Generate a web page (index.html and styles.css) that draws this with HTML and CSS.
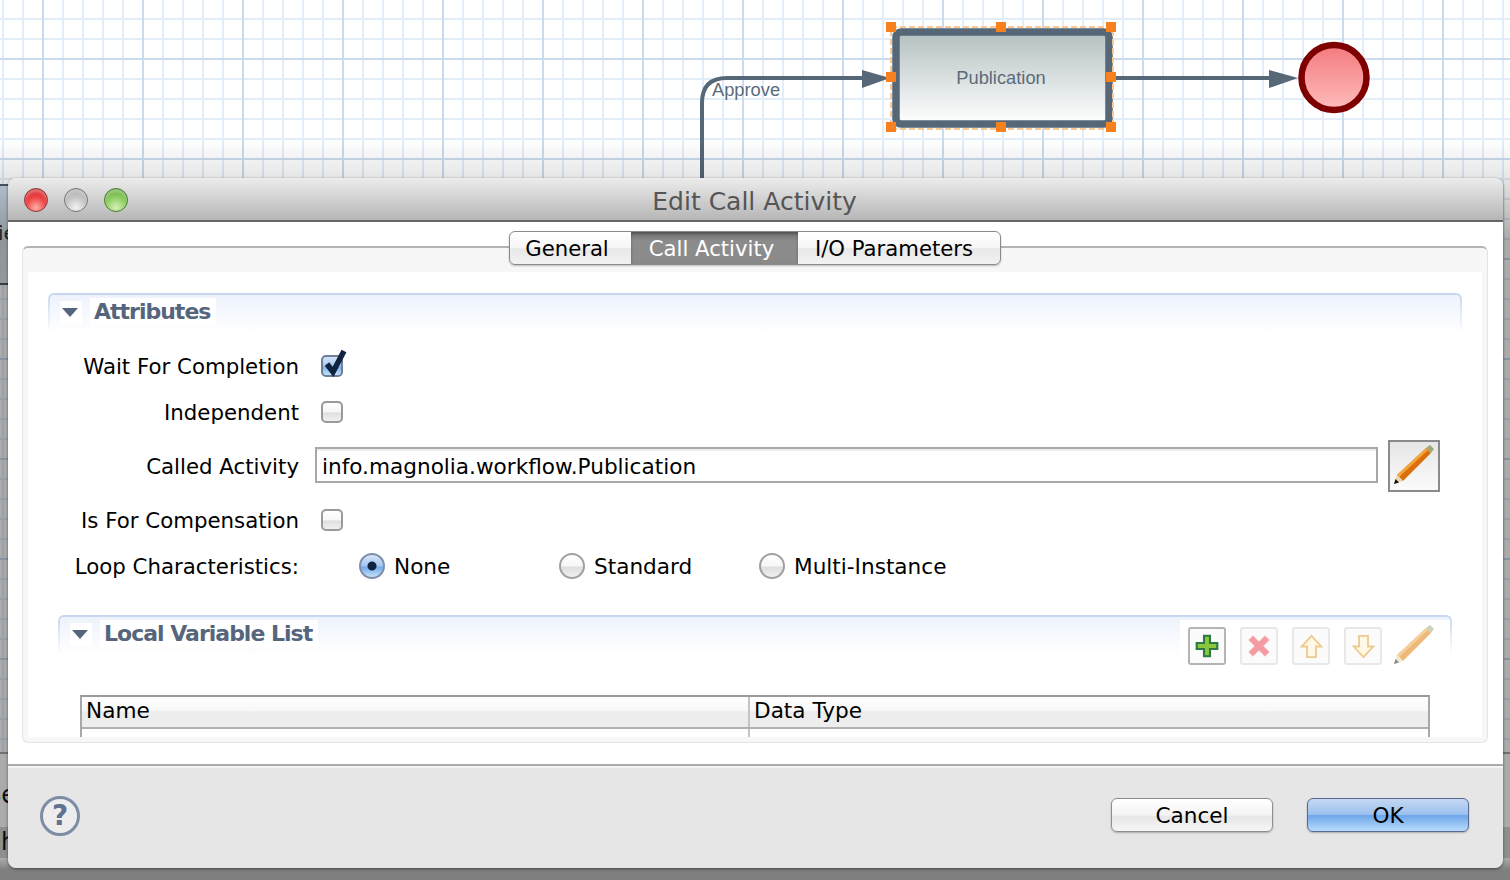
FILE: index.html
```html
<!DOCTYPE html>
<html lang="en">
<head>
    <meta charset="UTF-8">
    <meta name="viewport" content="width=device-width, initial-scale=1.0">
    <title>Edit Call Activity</title>
    <link rel="stylesheet" href="styles.css">
</head>
<body>
    <div class="canvas">
        <svg class="diagram" width="1510" height="180" viewBox="0 0 1510 180">
            <defs>
                <linearGradient id="taskFill" x1="0" y1="0" x2="0" y2="1">
                    <stop offset="0" stop-color="#b4c0c0"/>
                    <stop offset="1" stop-color="#ffffff"/>
                </linearGradient>
                <linearGradient id="endFill" x1="0" y1="0" x2="0" y2="1">
                    <stop offset="0" stop-color="#f37a7e"/>
                    <stop offset="1" stop-color="#ffbcbc"/>
                </linearGradient>
            </defs>
            <path d="M702 180V103Q702 78 727 78H866" fill="none" stroke="#566778" stroke-width="4"/>
            <polygon points="862,70 890,78 862,88" fill="#566778"/>
            <path d="M1114 78H1272" fill="none" stroke="#566778" stroke-width="4"/>
            <polygon points="1269,70 1298,78 1269,88" fill="#566778"/>
            <rect x="896" y="32" width="213" height="92" rx="5" fill="url(#taskFill)" stroke="#566778" stroke-width="7.5"/>
            <rect x="891" y="27" width="222" height="102" fill="none" stroke="#fcc88f" stroke-width="2" stroke-dasharray="6 3"/>
            <g fill="#f8811f">
                <rect x="886" y="22" width="10" height="10"/>
                <rect x="996" y="22" width="10" height="10"/>
                <rect x="1106" y="22" width="10" height="10"/>
                <rect x="886" y="72" width="10" height="10"/>
                <rect x="1106" y="72" width="10" height="10"/>
                <rect x="886" y="122" width="10" height="10"/>
                <rect x="996" y="122" width="10" height="10"/>
                <rect x="1106" y="122" width="10" height="10"/>
            </g>
            <circle cx="1334" cy="77.5" r="32.5" fill="url(#endFill)" stroke="#7e0000" stroke-width="6.5"/>
            <text class="diagram-text" x="712" y="96">Approve</text>
            <text class="diagram-text" x="1001" y="84" text-anchor="middle">Publication</text>
        </svg>
        <div class="panel-strip"><span>ie</span></div>
        <div class="lower-panel"></div>
        <div class="lower-band"></div>
        <div class="behind behind-se">Se</div>
        <div class="behind behind-h">h</div>
        <div class="dim"></div>
    </div>

    <div class="dialog">
        <div class="titlebar">
            <div class="lights">
                <span class="light light-red"></span>
                <span class="light light-grey"></span>
                <span class="light light-green"></span>
            </div>
            <div class="title">Edit Call Activity</div>
        </div>

        <div class="dialog-body">
            <div class="tab-pane">
                <div class="tab-strip">
                    <div class="tabs">
                        <div class="tab tab-general">General</div>
                        <div class="tab tab-call active">Call Activity</div>
                        <div class="tab tab-io">I/O Parameters</div>
                    </div>
                </div>

                <div class="tab-content">
                    <div class="section">
                        <div class="section-edge">
                            <div class="section-head">
                                <span class="twisty"><i></i></span>
                                <span class="section-title">Attributes</span>
                            </div>
                        </div>

                        <div class="form">
                            <label class="form-label">Wait For Completion</label>
                            <div>
                                <span class="check checked">
                                    <svg viewBox="0 0 26 30" width="26" height="30">
                                        <path d="M6 17L12 25L23 4" fill="none" stroke="#10233f" stroke-width="5.5"/>
                                    </svg>
                                </span>
                            </div>

                            <label class="form-label">Independent</label>
                            <div><span class="check"></span></div>

                            <label class="form-label">Called Activity</label>
                            <div class="field-row">
                                <input class="text-field" type="text" value="info.magnolia.workflow.Publication">
                                <button class="pick-button" type="button">
                                    <svg viewBox="0 0 44 44" width="44" height="44">
                                        <polygon points="5,31 34,4 39,9 11,37" fill="#d9700c"/>
                                        <polygon points="5,31 34,4 36,6 7,33" fill="#f4a63c"/>
                                        <polygon points="34,4 38,1 42,5 39,9" fill="#a0a878"/>
                                        <polygon points="2,40 5,31 11,37" fill="#e8d6b0"/>
                                        <polygon points="2,40 3.5,35 7,38.5" fill="#111"/>
                                    </svg>
                                </button>
                            </div>

                            <label class="form-label">Is For Compensation</label>
                            <div><span class="check"></span></div>

                            <label class="form-label">Loop Characteristics:</label>
                            <div class="radios">
                                <div class="radio-item"><span class="radio selected"></span>None</div>
                                <div class="radio-item"><span class="radio"></span>Standard</div>
                                <div class="radio-item"><span class="radio"></span>Multi-Instance</div>
                            </div>
                        </div>

                        <div class="section section-inner">
                            <div class="section-edge">
                                <div class="section-head">
                                    <span class="twisty"><i></i></span>
                                    <span class="section-title">Local Variable List</span>
                                    <div class="toolbar">
                                        <button class="tool tool-on" type="button">
                                            <svg viewBox="0 0 28 28" width="24" height="24">
                                                <path d="M10.500 2h7v8.500h8.500v7h-8.500v8.500h-7v-8.500H2v-7h8.500z" fill="#8cc63f" stroke="#2d7a45" stroke-width="2.500"/>
                                            </svg>
                                        </button>
                                        <button class="tool" type="button">
                                            <svg viewBox="0 0 28 28" width="24" height="24">
                                                <path d="M7 2l7 7 7-7 5 5-7 7 7 7-5 5-7-7-7 7-5-5 7-7-7-7z" fill="#f49aa2" stroke="#f4b6ba" stroke-width="1"/>
                                            </svg>
                                        </button>
                                        <button class="tool" type="button">
                                            <svg viewBox="0 0 28 28" width="25" height="25">
                                                <path d="M14 2L25 14H19V26H9V14H3z" fill="#fff8e4" stroke="#ecc98f" stroke-width="2"/>
                                            </svg>
                                        </button>
                                        <button class="tool" type="button">
                                            <svg viewBox="0 0 28 28" width="25" height="25">
                                                <path d="M14 26L25 14H19V2H9V14H3z" fill="#fff8e4" stroke="#ecc98f" stroke-width="2"/>
                                            </svg>
                                        </button>
                                        <span class="tool-pencil">
                                            <svg viewBox="0 0 44 44" width="44" height="44">
                                                <polygon points="5,31 34,4 39,9 11,37" fill="#eeb878"/>
                                                <polygon points="5,31 34,4 36,6 7,33" fill="#f6d09a"/>
                                                <polygon points="34,4 38,1 42,5 39,9" fill="#cfd2ba"/>
                                                <polygon points="2,40 5,31 11,37" fill="#f2e8d2"/>
                                                <polygon points="2,40 3.5,35 7,38.5" fill="#888"/>
                                            </svg>
                                        </span>
                                    </div>
                                </div>
                            </div>

                            <div class="table">
                                <div class="table-head">
                                    <div class="cell cell-name">Name</div>
                                    <div class="cell">Data Type</div>
                                </div>
                                <div class="table-row">
                                    <div class="cell cell-name"></div>
                                    <div class="cell"></div>
                                </div>
                            </div>
                        </div>
                    </div>
                </div>
            </div>
        </div>

        <div class="footer">
            <div class="help">?</div>
            <div class="footer-buttons">
                <button class="push" type="button">Cancel</button>
                <button class="push push-default" type="button">OK</button>
            </div>
        </div>
    </div>
</body>
</html>
```

FILE: styles.css
```css
html,
body {
    margin: 0;
    padding: 0;
    height: 100%;
}

body {
    position: relative;
    width: 1510px;
    height: 880px;
    overflow: hidden;
    font-family: "DejaVu Sans", sans-serif;
    font-size: 21.6px;
    color: #000;
    background-color: #fff;
}

/* diagram behind the dialog */
.canvas {
    position: absolute;
    left: 0;
    top: 0;
    width: 1510px;
    height: 880px;
    background-color: #fff;
    background-image:
        linear-gradient(to right, #c9dbee 2px, transparent 2px),
        linear-gradient(to bottom, #c9dbee 2px, transparent 2px),
        linear-gradient(to right, #e2edf8 2px, transparent 2px),
        linear-gradient(to bottom, #e2edf8 2px, transparent 2px);
    background-size: 100px 100px, 100px 100px, 20px 20px, 20px 20px;
    background-position: 42px 0, 0 58px, 2px 0, 0 18px;
}

.diagram {
    position: absolute;
    left: 0;
    top: 0;
}

.diagram-text {
    font-family: "Liberation Sans", Arial, sans-serif;
    font-size: 18.3px;
    fill: #5b6b7c;
}

.panel-strip {
    position: absolute;
    left: 0;
    top: 184px;
    width: 30px;
    height: 97px;
    border-top: 2px solid #4f5a66;
    border-bottom: 2px solid #4f5a66;
    background: linear-gradient(to bottom, #c6d8e8, #dfe3e6);
    overflow: hidden;
}

.panel-strip span {
    position: absolute;
    left: -2px;
    top: 35px;
    font-size: 20px;
    color: #333;
}

.lower-panel {
    position: absolute;
    left: 0;
    top: 752px;
    width: 1510px;
    height: 128px;
    border-top: 2px solid #a8a8a8;
    background-color: #fff;
}

.lower-band {
    position: absolute;
    left: 0;
    top: 827px;
    width: 1510px;
    height: 31px;
    background-color: #d4d4d4;
}

.behind {
    position: absolute;
    font-size: 24px;
    color: #111;
}

.behind-se {
    left: -14px;
    top: 781px;
}

.behind-h {
    left: 1px;
    top: 828px;
}

/* window shadow falling on everything behind the dialog */
.dim {
    position: absolute;
    left: 0;
    top: 140px;
    width: 1510px;
    height: 740px;
    background: linear-gradient(to bottom,
        rgba(0, 0, 0, 0) 0,
        rgba(0, 0, 0, 0.1) 38px,
        rgba(0, 0, 0, 0.33) 100px,
        rgba(0, 0, 0, 0.33) 718px,
        rgba(0, 0, 0, 0.5) 730px);
}

/* dialog window */
.dialog {
    position: absolute;
    left: 8px;
    top: 178px;
    width: 1495px;
    height: 690px;
    display: flex;
    flex-direction: column;
    border-radius: 8px;
    box-shadow: 0 1px 3px rgba(0, 0, 0, 0.5);
}

.titlebar {
    height: 42px;
    flex: none;
    position: relative;
    display: flex;
    align-items: center;
    justify-content: center;
    border-top-left-radius: 8px;
    border-top-right-radius: 8px;
    border-bottom: 2px solid #666;
    background: linear-gradient(to bottom, #ececec, #b6b6b6);
}

.lights {
    position: absolute;
    left: 16px;
    top: 10px;
    display: flex;
    gap: 16px;
}

.light {
    width: 24px;
    height: 24px;
    border-radius: 50%;
    box-sizing: border-box;
    border: 1px solid #777;
    box-shadow: inset 0 3px 3px rgba(255, 255, 255, 0.35);
}

.light-red {
    border-color: #8a3a3a;
    background: radial-gradient(circle at 50% 85%, #ffb0a8 0, #f0484a 45%, #c8161c 100%);
}

.light-grey {
    background: radial-gradient(circle at 50% 85%, #f2f2f2 0, #c4c4c4 50%, #a0a0a0 100%);
}

.light-green {
    border-color: #4a7a30;
    background: radial-gradient(circle at 50% 85%, #d6f2b8 0, #8ccc5e 50%, #4f9a30 100%);
}

.title {
    font-size: 25px;
    color: #555;
    padding: 4px 2px 0 0;
}

.dialog-body {
    height: 542px;
    flex: none;
    box-sizing: border-box;
    padding: 24px 15px 0 14px;
    background-color: #fff;
}

/* tabs */
.tab-pane {
    height: 497px;
    box-sizing: border-box;
    border: 1px solid #e4e4e4;
    border-top: 2px solid #b4b4b4;
    border-radius: 6px;
    background-color: #f7f7f7;
    padding-bottom: 5px;
    display: flex;
    flex-direction: column;
}

.tab-strip {
    height: 24px;
    flex: none;
    display: flex;
    justify-content: center;
}

.tabs {
    display: flex;
    height: 34px;
    margin-top: -17px;
    box-sizing: border-box;
    border: 1px solid #8a8a8a;
    border-radius: 6px;
    background: linear-gradient(to bottom, #fff 0, #f6f6f6 50%, #e8e8e8 52%, #f2f2f2 100%);
    overflow: hidden;
    box-shadow: 0 1px 2px rgba(0, 0, 0, 0.25);
}

.tab {
    display: flex;
    align-items: center;
    justify-content: center;
    box-sizing: border-box;
    font-size: 21.2px;
}

.tab-general {
    width: 121px;
    padding-right: 7px;
}

.tab-call {
    width: 167px;
    padding-right: 6px;
}

.tab-io {
    width: 202px;
    padding-right: 10px;
}

.tab.active {
    color: #fff;
    background: linear-gradient(to bottom, #737373, #8c8c8c 30%, #8a8a8a);
    box-shadow: inset 0 2px 3px rgba(0, 0, 0, 0.3);
}

.tab-content {
    flex: 1;
    min-height: 0;
    margin: 0 5px;
    padding: 21px 20px 0;
    background-color: #fff;
    overflow: hidden;
}

/* collapsible sections */
.section-edge {
    padding: 2px 2px 0;
    border-radius: 6px 6px 0 0;
    background: linear-gradient(to bottom, #c5d6f0, #fff);
}

.section-head {
    height: 38px;
    display: flex;
    align-items: flex-start;
    border-radius: 4px 4px 0 0;
    background: linear-gradient(to bottom, #edf2fc, #fff);
}

.twisty {
    width: 22px;
    height: 23px;
    margin: 6px 8px 0 10px;
    display: flex;
    align-items: center;
    justify-content: center;
    background-color: #fff;
}

.twisty i {
    width: 0;
    height: 0;
    margin-left: -2px;
    border-left: 8px solid transparent;
    border-right: 8px solid transparent;
    border-top: 9px solid #56657c;
}

.section-title {
    height: 28px;
    margin-top: 3px;
    padding: 0 6px 0 4px;
    font-size: 22px;
    letter-spacing: -1px;
    line-height: 28px;
    font-weight: bold;
    color: #56657c;
    background-color: #fff;
}

.section-inner {
    margin: 26px 10px 0;
}

/* attribute form */
.form {
    display: grid;
    grid-template-columns: 251px 1fr;
    grid-template-rows: 46px 46px 62px 46px 46px;
    column-gap: 16px;
    align-items: center;
    padding: 10px 22px 0 0;
}

.form-label {
    font-size: 21.3px;
    text-align: right;
    white-space: nowrap;
}

.check {
    position: relative;
    display: block;
    width: 22px;
    height: 22px;
    margin-left: 6px;
    box-sizing: border-box;
    border: 2px solid #9a9a9a;
    border-radius: 5px;
    background: linear-gradient(to bottom, #fff 0, #f6f6f6 50%, #e0e0e0 55%, #f0f0f0 100%);
}

.check.checked {
    border-color: #6f7f97;
    background: linear-gradient(to bottom, #d6e4f8 0, #a8c8f2 50%, #7cb0ec 55%, #c4e2fa 100%);
}

.check svg {
    position: absolute;
    left: -2px;
    top: -10px;
}

.field-row {
    display: flex;
    align-items: center;
    gap: 10px;
}

.text-field {
    flex: 1;
    min-width: 0;
    height: 36px;
    margin-bottom: 2px;
    box-sizing: border-box;
    padding: 2px 5px 0;
    border: 2px solid #a8a8a8;
    border-radius: 0;
    outline: none;
    box-shadow: inset 0 2px 0 #eee;
    font-family: "DejaVu Sans", sans-serif;
    font-size: 21.6px;
    color: #000;
}

.pick-button {
    width: 52px;
    height: 52px;
    padding: 0;
    display: flex;
    align-items: center;
    justify-content: center;
    box-sizing: border-box;
    border: 2px solid #8a8a8a;
    background: linear-gradient(to bottom, #e6e6e6, #fbfbfb);
}

.radios {
    display: flex;
    padding-left: 44px;
}

.radio-item {
    width: 200px;
    display: flex;
    align-items: center;
    gap: 9px;
    white-space: nowrap;
}

.radio {
    width: 26px;
    height: 26px;
    flex: none;
    box-sizing: border-box;
    border: 2px solid #a0a0a0;
    border-radius: 50%;
    background: linear-gradient(to bottom, #fff 0, #f6f6f6 50%, #dedede 55%, #f0f0f0 100%);
}

.radio.selected {
    border-color: #7d8ea8;
    background: radial-gradient(circle, #10233f 0, #10233f 4px, transparent 5px),
        linear-gradient(to bottom, #d6e4f8 0, #a4c6f2 50%, #74aaea 55%, #c4e2fa 100%);
}

/* toolbar on the local variable header */
.toolbar {
    margin-left: auto;
    margin-top: 3px;
    padding: 7px 14px 0 8px;
    display: flex;
    align-items: flex-start;
    gap: 14px;
    background-color: #fff;
}

.tool {
    width: 38px;
    height: 38px;
    padding: 0;
    display: flex;
    align-items: center;
    justify-content: center;
    box-sizing: border-box;
    border: 2px solid #e8e8e8;
    border-radius: 3px;
    background: #fbfbfb;
}

.tool-on {
    border-color: #b4b4b4;
}

.tool-pencil {
    display: block;
    height: 44px;
    margin-left: -4px;
    margin-top: -3px;
}

/* variable table */
.table {
    margin: 40px 22px 0;
    border: 2px solid #a8a8a8;
    border-bottom: none;
    border-top-color: #9a9a9a;
}

.table-head {
    display: grid;
    grid-template-columns: 668px 1fr;
    height: 30px;
    border-bottom: 2px solid #b0b0b0;
    background: linear-gradient(to bottom, #fff 0, #f8f8f8 45%, #ececec 50%, #eee 100%);
}

.table-row {
    display: grid;
    grid-template-columns: 668px 1fr;
    height: 30px;
}

.cell {
    padding-left: 4px;
    line-height: 27px;
}

.cell-name {
    border-right: 2px solid #c4c4c4;
    box-sizing: border-box;
}

/* dialog footer */
.footer {
    flex: 1;
    display: flex;
    align-items: center;
    justify-content: space-between;
    box-sizing: border-box;
    padding: 0 34px 4px 32px;
    border-top: 2px solid #aaa;
    border-radius: 0 0 8px 8px;
    background-color: #e6e6e6;
    box-shadow: inset 0 2px 0 #f4f4f4;
}

.help {
    width: 40px;
    height: 40px;
    margin-top: 2px;
    box-sizing: border-box;
    border: 3px solid #7d8da5;
    border-radius: 50%;
    background-color: #ededed;
    font-size: 28px;
    font-weight: bold;
    line-height: 34px;
    text-align: center;
    color: #5f7391;
}

.footer-buttons {
    display: flex;
    gap: 34px;
}

.push {
    width: 162px;
    height: 34px;
    padding: 0;
    box-sizing: border-box;
    border: 1px solid #8e8e8e;
    border-radius: 6px;
    font-family: "DejaVu Sans", sans-serif;
    font-size: 21.6px;
    color: #000;
    background: linear-gradient(to bottom, #fff 0, #f4f4f4 50%, #e6e6e6 55%, #f6f6f6 100%);
    box-shadow: 0 1px 2px rgba(0, 0, 0, 0.25);
}

.push-default {
    border-color: #5b6a93;
    background: linear-gradient(to bottom, #c4d8f2 0, #9cc0ee 48%, #6ea6ea 52%, #b8dcfa 100%);
}
```
